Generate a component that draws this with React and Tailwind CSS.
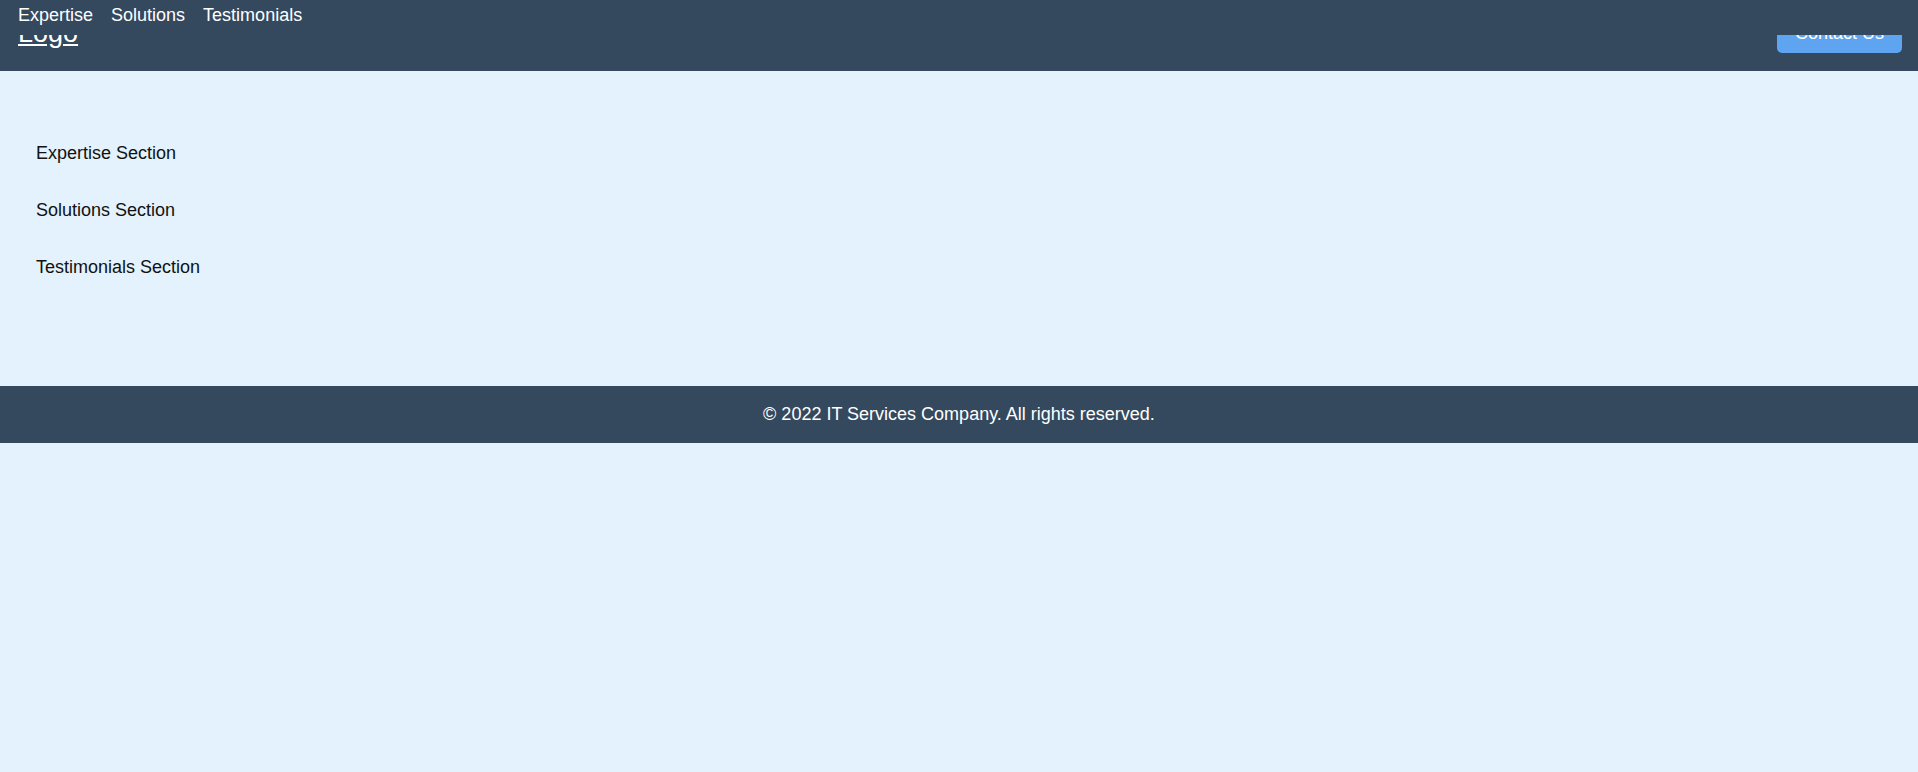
import React from 'react';

const navLinks = ['Expertise', 'Solutions', 'Testimonials'];
const sections = ['Expertise Section', 'Solutions Section', 'Testimonials Section'];

const App = () => {
  return (
    <div className="min-h-screen bg-[#e3f2fd] text-[18px] leading-[27px] font-['Liberation_Sans',Arial,sans-serif]">
      {/* header: the nav bar sits over the top of the logo row */}
      <header className="relative h-[71px] bg-[#34495e] text-white flex justify-between items-start pl-[18px] pr-4 pt-[14px]">
        <a href="#" className="mt-[4px] text-[27px] leading-[31px] underline">
          Logo
        </a>
        <button className="bg-[#5ea4f1] text-white rounded-[5px] px-[18px] py-[6px] leading-[27px]">
          Contact Us
        </button>
        <nav className="absolute top-0 left-0 right-0 h-[35px] bg-[#34495e] flex gap-[18px] pl-[18px] pt-[2px]">
          {navLinks.map((link) => (
            <a key={link} href="#" className="text-white">
              {link}
            </a>
          ))}
        </nav>
      </header>

      <main className="h-[315px] px-[36px] pt-[69px] flex flex-col gap-[30px] text-[#111]">
        {sections.map((s) => (
          <p key={s}>{s}</p>
        ))}
      </main>

      <footer className="bg-[#34495e] text-white text-center py-[15px]">
        © 2022 IT Services Company. All rights reserved.
      </footer>
    </div>
  );
};

export default App;
